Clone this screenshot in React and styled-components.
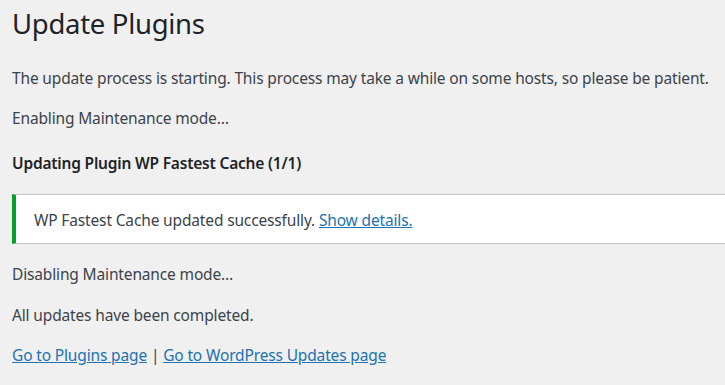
import React from 'react';
import styled, { createGlobalStyle } from 'styled-components';

const GlobalStyle = createGlobalStyle`
  html, body {
    margin: 0;
    padding: 0;
    background: #f0f0f1;
    overflow: hidden;
  }
  body {
    font-family: "Noto Sans", "Open Sans", sans-serif;
    color: #3c434a;
  }
`;

const Wrap = styled.div`
  padding: 5px 0 0 12px;
  display: flex;
  flex-direction: column;
  align-items: flex-start;
`;

const Title = styled.h1`
  margin: 0;
  font-size: 27.5px;
  line-height: 37px;
  letter-spacing: -0.3px;
  font-weight: 400;
  color: #1d2327;
`;

const Text = styled.p`
  margin: ${p => p.$top || 0}px 0 0;
  font-size: 15.5px;
  line-height: 24px;
  letter-spacing: -0.15px;
  white-space: nowrap;
`;

const Heading = styled.h2`
  margin: ${p => p.$top || 0}px 0 0;
  font-size: 15.5px;
  line-height: 24px;
  letter-spacing: -0.2px;
  font-weight: 600;
  color: #1d2327;
`;

const Notice = styled.div`
  align-self: stretch;
  margin: 19px -20px 0 0;
  background: #fff;
  border: 1px solid #c3c4c7;
  border-left: 4px solid #00a32a;
  padding: 13px 18px 11px;
  font-size: 15.5px;
  line-height: 24px;
  letter-spacing: -0.15px;
`;

const Link = styled.a`
  color: #2271b1;
  text-decoration: underline;
`;

export default function App() {
  return (
    <>
      <GlobalStyle />
      <Wrap>
        <Title>Update Plugins</Title>
        <Text $top={24}>
          The update process is starting. This process may take a while on some hosts, so please be patient.
        </Text>
        <Text $top={16}>Enabling Maintenance mode…</Text>
        <Heading $top={21}>Updating Plugin WP Fastest Cache (1/1)</Heading>
        <Notice>
          WP Fastest Cache updated successfully. <Link href="#">Show details.</Link>
        </Notice>
        <Text $top={18}>Disabling Maintenance mode…</Text>
        <Text $top={17}>All updates have been completed.</Text>
        <Text $top={16}>
          <Link href="#">Go to Plugins page</Link> | <Link href="#">Go to WordPress Updates page</Link>
        </Text>
      </Wrap>
    </>
  );
}
